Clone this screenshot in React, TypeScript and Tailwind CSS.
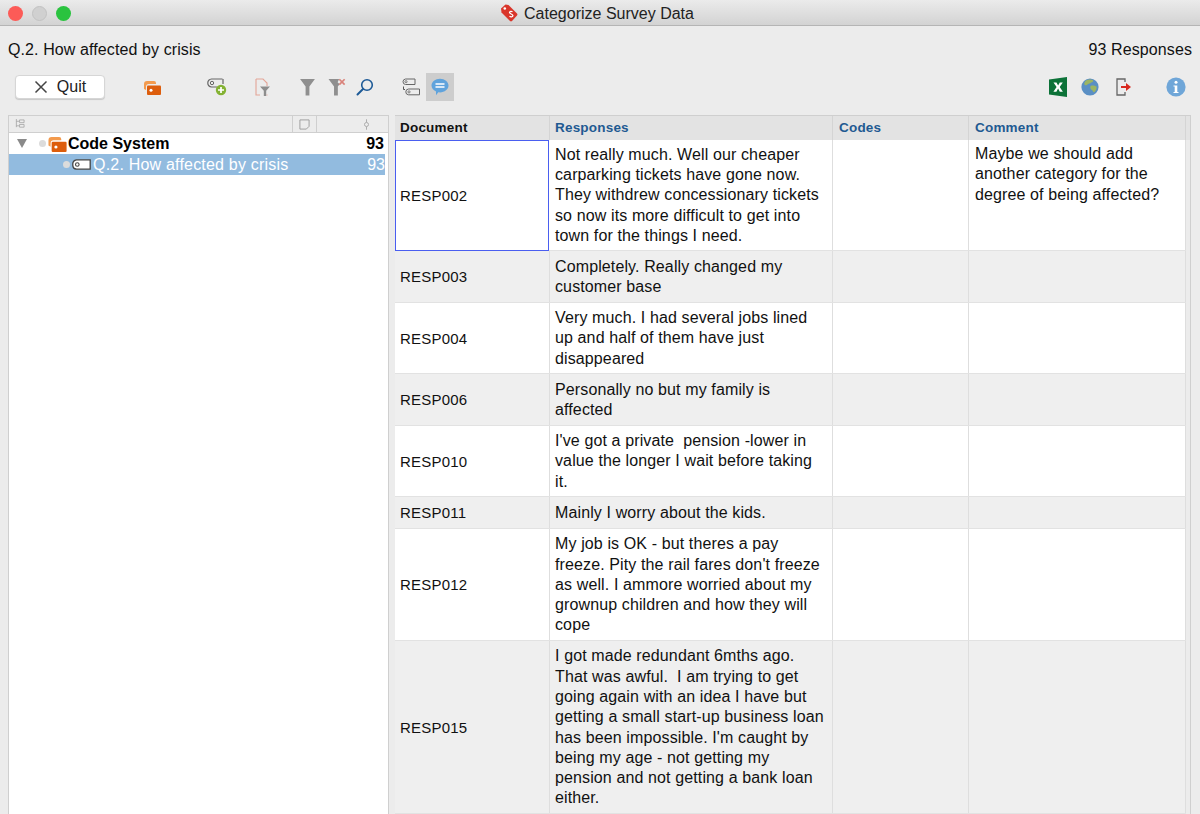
import React from "react";

const ROWS = [
  { doc: "RESP002", h: "h-[111px]", lines: ["Not really much. Well our cheaper", "carparking tickets have gone now.", "They withdrew concessionary tickets", "so now its more difficult to get into", "town for the things I need."], comment: ["Maybe we should add", "another category for the", "degree of being affected?"] },
  { doc: "RESP003", h: "h-[52px]", lines: ["Completely. Really changed my", "customer base"] },
  { doc: "RESP004", h: "h-[71px]", lines: ["Very much. I had several jobs lined", "up and half of them have just", "disappeared"] },
  { doc: "RESP006", h: "h-[52px]", lines: ["Personally no but my family is", "affected"] },
  { doc: "RESP010", h: "h-[71px]", lines: ["I've got a private  pension -lower in", "value the longer I wait before taking", "it."] },
  { doc: "RESP011", h: "h-[32px]", lines: ["Mainly I worry about the kids."] },
  { doc: "RESP012", h: "h-[112px]", lines: ["My job is OK - but theres a pay", "freeze. Pity the rail fares don't freeze", "as well. I ammore worried about my", "grownup children and how they will", "cope"] },
  { doc: "RESP015", h: "h-[173px]", lines: ["I got made redundant 6mths ago.", "That was awful.  I am trying to get", "going again with an idea I have but", "getting a small start-up business loan", "has been impossible. I'm caught by", "being my age - not getting my", "pension and not getting a bank loan", "either."] },
];

const COLS = "grid grid-cols-[155px_283px_136px_217px]";

function CodeSetIcon({ className }: { className?: string }) {
  return (
    <svg viewBox="0 0 18 15" className={className}>
      <path d="M1 9V4a3 3 0 0 1 3-3h7a2 2 0 0 1 2 2v1H6a3 3 0 0 0-3 3v3z" fill="#f39a4d" />
      <path d="M4 6.500a1 1 0 0 1 1-1h12a1 1 0 0 1 1 1v7.500a1 1 0 0 1-1 1H5a1 1 0 0 1-1-1z" fill="#dd5d0c" />
      <circle cx="8" cy="10.300" r="1.500" fill="#fff" />
    </svg>
  );
}

function TagIcon({ className, stroke = "#555" }: { className?: string; stroke?: string }) {
  return (
    <svg viewBox="0 0 19 11" className={className}>
      <path d="M4.500 .8H18.200V10.200H4.500A4.400 4.400 0 0 1 .8 5.500 4.400 4.400 0 0 1 4.500 .8z" fill="#fff" stroke={stroke} strokeWidth="1.300" />
      <circle cx="5.300" cy="5.500" r="1.800" fill="none" stroke={stroke} strokeWidth="1.100" />
    </svg>
  );
}

function Toolbar() {
  return (
    <div className="flex items-center h-[34px] mt-[10px]">
      <button className="ml-[15px] w-[90px] h-[24px] flex items-center justify-center gap-[9px] bg-white rounded-[4px] border border-[#d6d6d6] shadow-[0_1px_1px_rgba(0,0,0,0.15)] text-[16px] text-[#222]">
        <svg viewBox="0 0 14 14" className="w-[14px] h-[14px]">
          <path d="M1.500 1.500l11 11M12.500 1.500l-11 11" stroke="#444" strokeWidth="1.500" fill="none" />
        </svg>
        Quit
      </button>

      <CodeSetIcon className="w-[18px] h-[15px] ml-[38px]" />

      {/* new code */}
      <svg viewBox="0 0 20 18" className="w-[20px] h-[18px] ml-[46px]">
        <path d="M15.500 1H4.500A3.800 3.800 0 0 0 .8 5 3.800 3.800 0 0 0 4.500 9H10" fill="none" stroke="#666" strokeWidth="1.200" />
        <path d="M16 1v5" stroke="#666" strokeWidth="1.200" />
        <circle cx="5" cy="5" r="1.700" fill="none" stroke="#666" strokeWidth="1" />
        <circle cx="14" cy="12" r="5.200" fill="#84b233" />
        <path d="M14 9v6M11 12h6" stroke="#fff" strokeWidth="1.700" />
      </svg>

      {/* document filter */}
      <svg viewBox="0 0 16 18" className="w-[16px] h-[18px] ml-[28px]">
        <path d="M1 1h7l4 4v3M1 1v16h4M11.500 17h1" fill="none" stroke="#e3a597" strokeWidth="1.100" />
        <path d="M5 8.500h10l-3.800 4.300V18h-2.400v-5.200z" fill="#8d8d8d" />
      </svg>

      {/* filter */}
      <svg viewBox="0 0 14 17" className="w-[15px] h-[18px] ml-[29px]">
        <path d="M0 1h14L8.800 8v8.500H5.200V8z" fill="#8f8f8f" />
      </svg>

      {/* clear filter */}
      <svg viewBox="0 0 16 17" className="w-[18px] h-[18px] ml-[13px]">
        <path d="M0 1h10L8.600 4l1.800 2-1.600 2v8.500H5.200V8z" fill="#8f8f8f" />
        <path d="M10.200 1.200l5 5M15.200 1.200l-5 5" stroke="#d9827a" strokeWidth="1.600" />
      </svg>

      {/* search */}
      <svg viewBox="0 0 18 18" className="w-[18px] h-[18px] ml-[10px]">
        <circle cx="11" cy="7" r="5.300" fill="none" stroke="#1d5a97" strokeWidth="1.600" />
        <path d="M7 11l-5.500 5.500" stroke="#1d5a97" strokeWidth="2" strokeLinecap="round" />
      </svg>

      {/* linked codes */}
      <svg viewBox="0 0 18 18" className="w-[18px] h-[18px] ml-[28px]">
        <path d="M3.500 1h9.500v5.500H3.500A2.800 2.800 0 0 1 1 3.700 2.800 2.800 0 0 1 3.500 1z" fill="none" stroke="#666" strokeWidth="1" />
        <circle cx="4" cy="3.700" r="1.100" fill="none" stroke="#666" strokeWidth=".8" />
        <path d="M6.500 11h11v5.800H6.500A2.900 2.900 0 0 1 3.800 13.900 2.900 2.900 0 0 1 6.500 11z" fill="none" stroke="#666" strokeWidth="1" />
        <circle cx="7" cy="13.900" r="1.100" fill="none" stroke="#666" strokeWidth=".8" />
        <path d="M1.500 8.500v3h1.500" fill="none" stroke="#555" strokeWidth="1" />
      </svg>

      {/* comment toggle */}
      <div className="w-[28px] h-[28px] ml-[6px] bg-[#cdcdcd] flex items-center justify-center">
        <svg viewBox="0 0 18 18" className="w-[18px] h-[18px]">
          <path d="M9 .8c4.700 0 8.500 3 8.500 6.800S13.700 14.400 9 14.400c-.6 0-1.200 0-1.700-.1L5 17.200v-3.700C2.300 12.300.5 10.100.5 7.600.5 3.800 4.300.8 9 .8z" fill="#60a3dc" />
          <path d="M4.500 6h9M4.500 9h9" stroke="#fff" strokeWidth="1.300" />
        </svg>
      </div>

      <div className="ml-auto flex items-center">
        {/* excel */}
        <svg viewBox="0 0 18 20" className="w-[18px] h-[20px]">
          <path d="M0 2.500L18 0v20L0 17.500z" fill="#0c7238" />
          <path d="M4.500 5.500h3l1.600 3 1.700-3h3l-3.100 4.500 3.200 4.700h-3.100l-1.700-3.100-1.700 3.100h-3l3.200-4.700z" fill="#fff" />
        </svg>
        {/* globe */}
        <svg viewBox="0 0 18 18" className="w-[18px] h-[18px] ml-[14px]">
          <circle cx="9" cy="9" r="8.600" fill="#5a8fc4" />
          <path d="M5 2.500c2-1 5-1.300 7-.3.700 1.300-.6 2.100-1.900 2.300-.8 1.200-2.900.9-3.700 2-.5 1-2 .9-2.900.2C3 5.700 3.500 3.500 5 2.500zM9.500 8c2-1 4.400-.4 6 .6.500 2-.5 4.300-2.300 5.700-1.200.4-1.300-1.500-2.300-2.200-1-.8-2-1.600-1.400-4.100z" fill="#9cb562" />
        </svg>
        {/* export */}
        <svg viewBox="0 0 16 18" className="w-[16px] h-[18px] ml-[17px]">
          <path d="M9 4V1H1v16h8v-3" fill="none" stroke="#666" strokeWidth="1.300" />
          <path d="M5 8h5V5l5 4-5 4v-3H5z" fill="#d8291f" />
        </svg>
        {/* info */}
        <svg viewBox="0 0 20 20" className="w-[20px] h-[20px] ml-[34px] mr-[14px]">
          <circle cx="10" cy="10" r="9.600" fill="#6fa6d8" />
          <circle cx="10" cy="5.300" r="1.500" fill="#fff" />
          <path d="M8.500 8.500h2.800v6.500h1.200v1h-5v-1h1.200V9.500H7.500v-1z" fill="#fff" />
        </svg>
      </div>
    </div>
  );
}

function TreePanel() {
  return (
    <div className="w-[381px] ml-[8px] bg-white border-x border-[#cfcfcf] flex flex-col shrink-0">
      <div className="h-[18px] flex bg-[#ececec] border-y border-[#cfcfcf]">
        <div className="w-[284px] flex items-center pl-[6px] border-r border-[#cfcfcf]">
          <svg viewBox="0 0 11 11" className="w-[10px] h-[10px]">
            <path d="M1.500 0v9M1.500 2.500h3M1.500 7.500h3M5 1h5v3H5zM5 6h5v3H5z" fill="none" stroke="#a5a5a5" strokeWidth=".9" />
          </svg>
        </div>
        <div className="w-[24px] flex items-center justify-center border-r border-[#cfcfcf]">
          <svg viewBox="0 0 12 12" className="w-[11px] h-[11px]">
            <path d="M1 1h10v7l-3 3H1z" fill="none" stroke="#999" strokeWidth="1" />
          </svg>
        </div>
        <div className="flex-1 flex items-center justify-end pr-[18px]">
          <svg viewBox="0 0 8 12" className="w-[7px] h-[11px]">
            <path d="M4 0v3.500M4 8.500V12" stroke="#a5a5a5" strokeWidth="1" />
            <circle cx="4" cy="6" r="2.300" fill="none" stroke="#a5a5a5" strokeWidth="1" />
          </svg>
        </div>
      </div>
      <div className="h-[21px] flex items-center text-[16px] font-bold text-black">
        <svg viewBox="0 0 10 9" className="w-[10px] h-[9px] ml-[8px]"><path d="M0 0h10L5 9z" fill="#8a8a8a" /></svg>
        <span className="w-[7px] h-[7px] rounded-full bg-[#dcdcdc] ml-[12px]" />
        <CodeSetIcon className="w-[20px] h-[16px] ml-[1px]" />
        <span className="ml-[1px]">Code System</span>
        <span className="ml-auto mr-[4px]">93</span>
      </div>
      <div className="h-[21px] w-[376px] flex items-center bg-[#92bbdf] text-white text-[16px]">
        <span className="w-[7px] h-[7px] rounded-full bg-[#dcdcdc] ml-[54px]" />
        <TagIcon className="w-[19px] h-[11px] ml-[2px]" stroke="#444" />
        <span className="ml-[2px] tracking-[0.2px]">Q.2. How affected by crisis</span>
        <span className="ml-auto">93</span>
      </div>
    </div>
  );
}

function ResponseTable() {
  return (
    <div className="w-[796px] ml-[6px] border-t border-r border-[#cfcfcf] shrink-0">
      <div className="h-[24px] bg-[#e3e3e3]">
        <div className={`${COLS} w-[791px] h-full text-[13.5px] font-bold text-[#1f5a92] tracking-[0.2px]`}>
          <div className="pl-[5px] pt-[1px] flex items-center text-[#111] border-r border-[#d4d4d4]">Document</div>
          <div className="pl-[5px] pt-[1px] flex items-center border-r border-[#d4d4d4]">Responses</div>
          <div className="pl-[6px] pt-[1px] flex items-center border-r border-[#d4d4d4]">Codes</div>
          <div className="pl-[6px] pt-[1px] flex items-center border-r border-[#d4d4d4]">Comment</div>
        </div>
      </div>
      {ROWS.map((r, i) => (
        <div key={r.doc} className={`${COLS} w-[791px] ${r.h} border-b border-[#e2e2e2] text-[16px] leading-[20.3px] text-[#111] tracking-[0.12px] ${i % 2 ? "bg-[#efefef]" : "bg-white"}`}>
          <div className={`pt-[2px] flex items-center text-[15px] tracking-[0.22px] ${i === 0 ? "pl-[4px] border border-[#4a5ef0] -mb-px mr-px" : "pl-[5px] border-r border-[#dedede]"}`}>{r.doc}</div>
          <div className="pl-[5px] pt-[1px] flex flex-col justify-center whitespace-pre border-r border-[#dedede]">
            {r.lines.map((l) => <div key={l}>{l}</div>)}
          </div>
          <div className="border-r border-[#dedede]" />
          <div className="pl-[6px] pt-[4px] whitespace-pre border-r border-[#dedede]">
            {r.comment?.map((l) => <div key={l}>{l}</div>)}
          </div>
        </div>
      ))}
    </div>
  );
}

export default function App() {
  return (
    <div className="w-[1200px] h-[814px] overflow-hidden bg-[#ececec] flex flex-col" style={{ fontFamily: '"Liberation Sans", Arial, sans-serif' }}>
      <div className="h-[26px] shrink-0 relative flex items-center justify-center pt-[2px] pr-[6px] bg-gradient-to-b from-[#ebebeb] to-[#d3d3d3] border-b border-[#b5b5b5] text-[16px] text-[#222]">
        <div className="absolute left-[8px] top-[6px] flex gap-[9px]">
          <span className="w-[15px] h-[15px] rounded-full bg-[#fc5b57]" />
          <span className="w-[15px] h-[15px] rounded-full bg-[#d0d0d0] border border-[#c2c2c2]" />
          <span className="w-[15px] h-[15px] rounded-full bg-[#2ac33f]" />
        </div>
        <svg viewBox="0 0 18 18" className="w-[18px] h-[18px] mr-[6px] -mt-[2px]">
          <path d="M1 4.500L5.500 .5l3 .5 8.500 8.500a1.500 1.500 0 0 1 0 2l-5 5.500a1.500 1.500 0 0 1-2 0L1.500 8.500z" fill="#d9362b" />
          <circle cx="4.800" cy="4.500" r="1.300" fill="#fff" />
          <path d="M12.500 7.800c-1-.8-3-.6-3 .8 0 1.600 3.400 1.200 3.400 3 0 1.400-2.200 1.600-3.400.7" fill="none" stroke="#fff" strokeWidth="1.300" />
        </svg>
        Categorize Survey Data
      </div>

      <div className="flex justify-between items-center px-[8px] mt-[14px] text-[16px] leading-[20px] text-[#111] tracking-[0.1px]">
        <span>Q.2. How affected by crisis</span>
        <span>93 Responses</span>
      </div>

      <Toolbar />

      <div className="flex flex-1 min-h-0 mt-[11px]">
        <TreePanel />
        <ResponseTable />
      </div>
    </div>
  );
}
